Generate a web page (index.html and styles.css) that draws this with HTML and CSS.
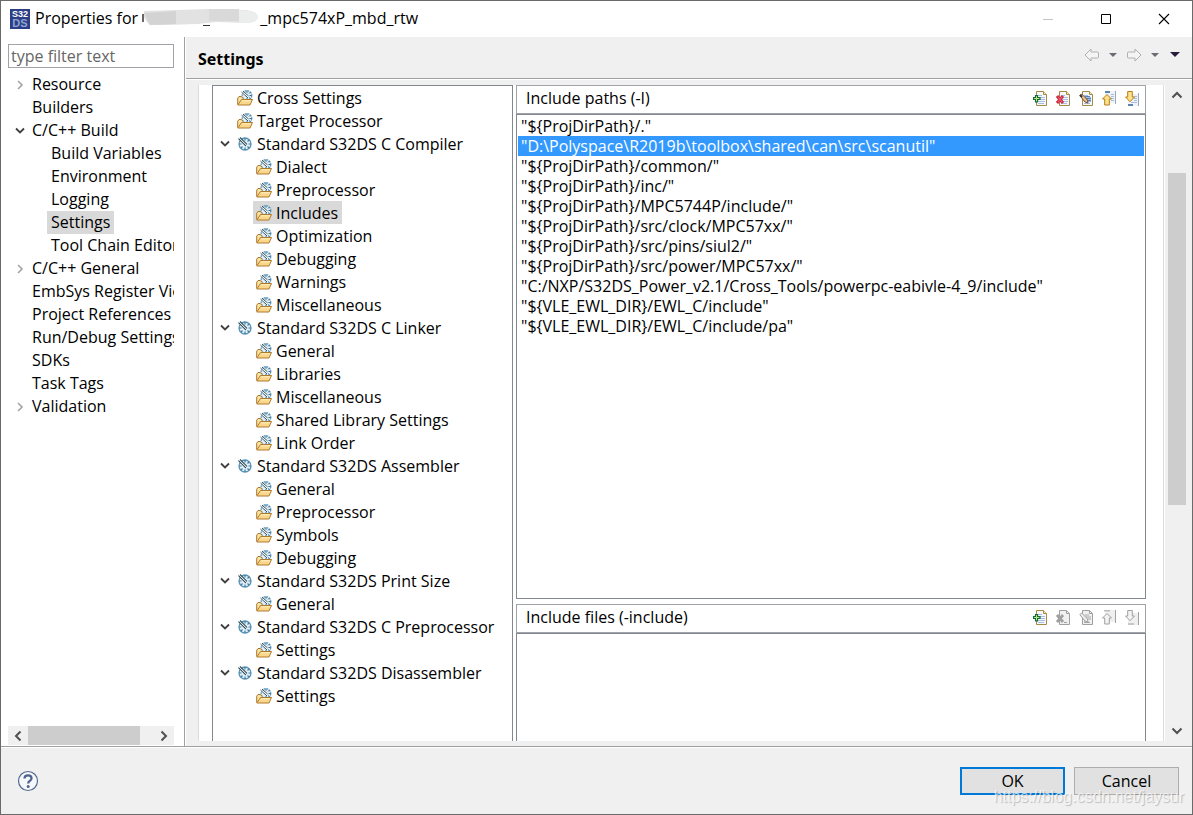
FILE: index.html
```html
<!DOCTYPE html>
<html lang="en">
<head>
<meta charset="utf-8">
<title>Properties</title>
<link rel="stylesheet" href="styles.css">
</head>
<body>
<svg class="sprite" aria-hidden="true">
  <symbol id="down" viewBox="0 0 10 8"><path d="M1 1.500l4 4 4-4" fill="none" stroke="#404040" stroke-width="1.800"/></symbol>
  <symbol id="right" viewBox="0 0 8 10"><path d="M2 1l4 4-4 4" fill="none" stroke="#a6a6a6" stroke-width="1.700"/></symbol>
  <symbol id="dial" viewBox="0 0 16 16">
    <circle cx="8" cy="8" r="6" fill="#e4f0f7" stroke="#5b93b5" stroke-width="1.300"/>
    <path d="M8 2v2.500M14 8h-2.500M8 14v-2.500M2 8h2.500M12 4l-1.500 1.500M12 12L10.500 10.500M4 12L5.500 10.500" stroke="#3a7ca5" stroke-width="1.200"/>
    <path d="M1.500 2.500L9 10M3 1.500L10 8.500" stroke="#35525f" stroke-width="1.100"/>
    <path d="M2.500 2.500L9.500 9.200" stroke="#fff" stroke-width=".8"/>
  </symbol>
  <symbol id="folder" viewBox="0 0 16 16">
    <circle cx="10" cy="5.500" r="4.800" fill="#e4f0f7" stroke="#5b93b5" stroke-width="1.200" stroke-dasharray="2 .8"/>
    <path d="M10 .8v2M14.500 5.500h-2M13.200 2.200L12 3.500M13.200 8.500L12 7.500M10 10V8" stroke="#2d6a91"/>
    <path d="M4.500 2L11 8M6 1L11.500 6" stroke="#35525f"/>
    <path d="M5 1.500L11.500 7.200" stroke="#fff" stroke-width=".8"/>
    <path d="M.7 14.500V8.200L2 6.500h2.500L6 8.500" fill="#fbe3a3" stroke="#a8742b"/>
    <path d="M.8 15L4.500 9.500h11L13 15z" fill="#f9d68a" stroke="#b07a2c"/>
    <path d="M5 10.800h9" stroke="#fff0c0"/>
  </symbol>
  <symbol id="page" viewBox="0 0 15 15">
    <path d="M3.500.5h7l3 3v11h-10z" fill="#f5f8fd" stroke="#a58a43"/>
    <path d="M10.500.5v3h3" fill="#ffe9a8" stroke="#a58a43"/>
    <path d="M5 4.500h4M5 6.500h7M5 8.500h7M5 10.500h7M5 12.500h6" stroke="#a9bce0"/>
  </symbol>
  <symbol id="page-off" viewBox="0 0 15 15">
    <path d="M3.500.5h7l3 3v11h-10z" fill="#f0f0f0" stroke="#a0a0a0"/>
    <path d="M10.500.5v3h3" fill="none" stroke="#a0a0a0"/>
  </symbol>
  <symbol id="add" viewBox="0 0 15 15"><use href="#page"/><path d="M2.500 4.500h2v2h2.500v2h-2.500v2.500h-2V8.500H.5v-2h2z" fill="#8edb5e" stroke="#176b3b" stroke-width="1.200"/><path d="M3.500 5.500v4.500M1.500 7.500h4.500" stroke="#b9ec80"/></symbol>
  <symbol id="delete" viewBox="0 0 15 15"><use href="#page"/><path d="M1 5l6 7M7 5l-6 7" stroke="#d02c43" stroke-width="3"/><path d="M2 6l4 5M6 6l-4 5" stroke="#ef6672"/></symbol>
  <symbol id="edit" viewBox="0 0 15 15"><use href="#page"/><path d="M6 5.500h5M7 7.500h5M9 9.500h3" stroke="#5f7fb5"/><path d="M.8 4.500l2-1.500 5.700 6 .5 3-3-1z" fill="#e9c384" stroke="#705039"/><path d="M1 4l2 2" stroke="#333" stroke-width="1.800"/></symbol>
  <symbol id="up" viewBox="0 0 15 15"><path d="M3 0h10v12H3z" fill="#eef2f9"/><path d="M9 3.500h3M9 5.500h3M9 7.500h3M9 9.500h3" stroke="#a9bce0"/><path d="M3 1h5" stroke="#2b5e98" stroke-width="1.500"/><path d="M13.500 0v13" stroke="#9aa6b8"/><path d="M5 3.500L9.500 8H7.300v6H2.700V8H.5z" fill="#ffe38a" stroke="#b67c16"/></symbol>
  <symbol id="move-down" viewBox="0 0 15 15"><path d="M3 3h10v12H3z" fill="#eef2f9"/><path d="M9 5.500h3M9 7.500h3M9 9.500h3M6 11.500h6" stroke="#a9bce0"/><path d="M3 14h5" stroke="#2b5e98" stroke-width="1.500"/><path d="M13.500 2v13" stroke="#9aa6b8"/><path d="M2.700.5h4.600V6h2.200L5 10.700.5 6h2.200z" fill="#ffe38a" stroke="#b67c16"/></symbol>
  <symbol id="delete-off" viewBox="0 0 15 15"><use href="#page-off"/><path d="M1 5l6 7M7 5l-6 7" stroke="#a0a0a0" stroke-width="2.800"/><path d="M8 12.500h3" stroke="#a0a0a0"/></symbol>
  <symbol id="edit-off" viewBox="0 0 15 15"><use href="#page-off"/><path d="M6 5h4M7 7h5M9 9h3M5 11h3M5 12.500h6" stroke="#a8a8a8"/><path d="M.8 4.500l2-1.500 5.700 6 .5 3-3-1z" fill="#eee" stroke="#a0a0a0"/></symbol>
  <symbol id="up-off" viewBox="0 0 15 15"><path d="M3 0h10v12H3z" fill="#efefef"/><path d="M2 .8h6M13.500 0v13" stroke="#a0a0a0"/><path d="M5 3.500L9.500 8H7.300v6H2.700V8H.5z" fill="#f3f3f3" stroke="#a0a0a0"/></symbol>
  <symbol id="down-off" viewBox="0 0 15 15"><path d="M3 3h10v12H3z" fill="#efefef"/><path d="M3 14h6M13.500 2v13" stroke="#a0a0a0"/><path d="M2.700.5h4.600V6h2.200L5 10.700.5 6h2.200z" fill="#f3f3f3" stroke="#a0a0a0"/></symbol>
</svg>

<div class="window">
  <header class="titlebar">
    <svg class="app-icon" viewBox="0 0 20 20" aria-hidden="true">
      <rect width="20" height="20" fill="#2b3f88"/>
      <text x="10" y="8" class="logo-top">S32</text>
      <text x="10" y="18" class="logo-bottom">DS</text>
    </svg>
    <h1 class="title">Properties for <span class="redacted"><svg viewBox="0 0 118 20" aria-hidden="true">
      <path d="M1 6v8" stroke="#333" stroke-width="1.500"/>
      <path d="M2 3L34 2 66 1 104 2Q116 4 116 9T104 15L74 14 56 16 22 17 8 17Q4 14 2 9z" fill="#e2e2e2"/>
      <path d="M2 5L34 3v13L8 17z" fill="#d3d3d3"/><path d="M67 1h30v12H67z" fill="#d9d9d9"/>
      <path d="M97 2l9 1q10 2 10 6t-12 6l-7-1z" fill="#eceeee"/><path d="M61 17.500h7" stroke="#333"/>
    </svg></span>_mpc574xP_mbd_rtw</h1>
    <div class="window-controls">
      <button type="button" aria-label="Minimize" disabled><svg viewBox="0 0 12 12"><path d="M1 6.500h10" stroke="#c4c4c4"/></svg></button>
      <button type="button" aria-label="Maximize"><svg viewBox="0 0 12 12"><path d="M1.500 1.500h9v9h-9z" fill="none" stroke="#000"/></svg></button>
      <button type="button" aria-label="Close"><svg viewBox="0 0 12 12"><path d="M1 1l10 10M11 1L1 11" stroke="#000" stroke-width="1.100"/></svg></button>
    </div>
  </header>

  <div class="body">
    <nav class="sidebar" aria-label="Property pages">
      <input class="filter" type="text" placeholder="type filter text" aria-label="type filter text">
      <ul class="tree nav-tree">
        <li class="row"><button class="toggle" aria-label="Expand Resource"><svg class="closed"><use href="#right"/></svg></button><span class="label">Resource</span></li>
        <li class="row"><span class="toggle"></span><span class="label">Builders</span></li>
        <li class="row"><button class="toggle" aria-label="Collapse C/C++ Build"><svg class="open"><use href="#down"/></svg></button><span class="label">C/C++ Build</span></li>
        <li class="row child"><span class="label">Build Variables</span></li>
        <li class="row child"><span class="label">Environment</span></li>
        <li class="row child"><span class="label">Logging</span></li>
        <li class="row child"><span class="label selected">Settings</span></li>
        <li class="row child"><span class="label">Tool Chain Editor</span></li>
        <li class="row"><button class="toggle" aria-label="Expand C/C++ General"><svg class="closed"><use href="#right"/></svg></button><span class="label">C/C++ General</span></li>
        <li class="row"><span class="toggle"></span><span class="label">EmbSys Register View</span></li>
        <li class="row"><span class="toggle"></span><span class="label">Project References</span></li>
        <li class="row"><span class="toggle"></span><span class="label">Run/Debug Settings</span></li>
        <li class="row"><span class="toggle"></span><span class="label">SDKs</span></li>
        <li class="row"><span class="toggle"></span><span class="label">Task Tags</span></li>
        <li class="row"><button class="toggle" aria-label="Expand Validation"><svg class="closed"><use href="#right"/></svg></button><span class="label">Validation</span></li>
      </ul>
      <div class="hscroll">
        <button type="button" aria-label="Scroll left"><svg viewBox="0 0 10 12"><path d="M7.500 1.500L3 6l4.500 4.500" fill="none" stroke="#505050" stroke-width="2"/></svg></button>
        <div class="hthumb"></div>
        <button type="button" aria-label="Scroll right"><svg viewBox="0 0 10 12"><path d="M2.500 1.500L7 6l-4.500 4.500" fill="none" stroke="#505050" stroke-width="2"/></svg></button>
      </div>
    </nav>

    <main class="main">
      <div class="page-head">
        <h2>Settings</h2>
        <div class="history">
          <button type="button" class="arrow" aria-label="Back" disabled><svg viewBox="0 0 16 14"><path d="M1 7l6-6v3h6.500q1 0 1 1v4q0 1-1 1H7v3z" fill="#f4f4f4" stroke="#b0b0b0"/></svg></button>
          <button type="button" class="caret" aria-label="Back history"><svg viewBox="0 0 8 4"><path d="M0 0h8L4 4z" fill="#6b6b72"/></svg></button>
          <button type="button" class="arrow" aria-label="Forward" disabled><svg viewBox="0 0 16 14"><path d="M15 7L9 1v3H2.500q-1 0-1 1v4q0 1 1 1H9v3z" fill="#f4f4f4" stroke="#b0b0b0"/></svg></button>
          <button type="button" class="caret" aria-label="Forward history"><svg viewBox="0 0 8 4"><path d="M0 0h8L4 4z" fill="#6b6b72"/></svg></button>
          <button type="button" class="caret menu" aria-label="View menu"><svg viewBox="0 0 10 5"><path d="M0 0h10L5 5z" fill="#281c3c"/></svg></button>
        </div>
      </div>

      <div class="content">
        <div class="panel">
          <ul class="tree tool-tree">
            <li class="row"><span class="toggle"></span><svg class="icon"><use href="#folder"/></svg><span class="label">Cross Settings</span></li>
            <li class="row"><span class="toggle"></span><svg class="icon"><use href="#folder"/></svg><span class="label">Target Processor</span></li>
            <li class="row"><button class="toggle" aria-label="Collapse"><svg class="open"><use href="#down"/></svg></button><svg class="icon"><use href="#dial"/></svg><span class="label">Standard S32DS C Compiler</span></li>
            <li class="row child"><span class="item"><svg class="icon"><use href="#folder"/></svg><span class="label">Dialect</span></span></li>
            <li class="row child"><span class="item"><svg class="icon"><use href="#folder"/></svg><span class="label">Preprocessor</span></span></li>
            <li class="row child"><span class="item selected"><svg class="icon"><use href="#folder"/></svg><span class="label">Includes</span></span></li>
            <li class="row child"><span class="item"><svg class="icon"><use href="#folder"/></svg><span class="label">Optimization</span></span></li>
            <li class="row child"><span class="item"><svg class="icon"><use href="#folder"/></svg><span class="label">Debugging</span></span></li>
            <li class="row child"><span class="item"><svg class="icon"><use href="#folder"/></svg><span class="label">Warnings</span></span></li>
            <li class="row child"><span class="item"><svg class="icon"><use href="#folder"/></svg><span class="label">Miscellaneous</span></span></li>
            <li class="row"><button class="toggle" aria-label="Collapse"><svg class="open"><use href="#down"/></svg></button><svg class="icon"><use href="#dial"/></svg><span class="label">Standard S32DS C Linker</span></li>
            <li class="row child"><span class="item"><svg class="icon"><use href="#folder"/></svg><span class="label">General</span></span></li>
            <li class="row child"><span class="item"><svg class="icon"><use href="#folder"/></svg><span class="label">Libraries</span></span></li>
            <li class="row child"><span class="item"><svg class="icon"><use href="#folder"/></svg><span class="label">Miscellaneous</span></span></li>
            <li class="row child"><span class="item"><svg class="icon"><use href="#folder"/></svg><span class="label">Shared Library Settings</span></span></li>
            <li class="row child"><span class="item"><svg class="icon"><use href="#folder"/></svg><span class="label">Link Order</span></span></li>
            <li class="row"><button class="toggle" aria-label="Collapse"><svg class="open"><use href="#down"/></svg></button><svg class="icon"><use href="#dial"/></svg><span class="label">Standard S32DS Assembler</span></li>
            <li class="row child"><span class="item"><svg class="icon"><use href="#folder"/></svg><span class="label">General</span></span></li>
            <li class="row child"><span class="item"><svg class="icon"><use href="#folder"/></svg><span class="label">Preprocessor</span></span></li>
            <li class="row child"><span class="item"><svg class="icon"><use href="#folder"/></svg><span class="label">Symbols</span></span></li>
            <li class="row child"><span class="item"><svg class="icon"><use href="#folder"/></svg><span class="label">Debugging</span></span></li>
            <li class="row"><button class="toggle" aria-label="Collapse"><svg class="open"><use href="#down"/></svg></button><svg class="icon"><use href="#dial"/></svg><span class="label">Standard S32DS Print Size</span></li>
            <li class="row child"><span class="item"><svg class="icon"><use href="#folder"/></svg><span class="label">General</span></span></li>
            <li class="row"><button class="toggle" aria-label="Collapse"><svg class="open"><use href="#down"/></svg></button><svg class="icon"><use href="#dial"/></svg><span class="label">Standard S32DS C Preprocessor</span></li>
            <li class="row child"><span class="item"><svg class="icon"><use href="#folder"/></svg><span class="label">Settings</span></span></li>
            <li class="row"><button class="toggle" aria-label="Collapse"><svg class="open"><use href="#down"/></svg></button><svg class="icon"><use href="#dial"/></svg><span class="label">Standard S32DS Disassembler</span></li>
            <li class="row child"><span class="item"><svg class="icon"><use href="#folder"/></svg><span class="label">Settings</span></span></li>
          </ul>

          <div class="options">
            <section class="group paths">
              <div class="group-head">
                <h3>Include paths (-I)</h3>
                <div class="tools">
                  <button type="button" aria-label="Add"><svg><use href="#add"/></svg></button>
                  <button type="button" aria-label="Delete"><svg><use href="#delete"/></svg></button>
                  <button type="button" aria-label="Edit"><svg><use href="#edit"/></svg></button>
                  <button type="button" aria-label="Move up"><svg><use href="#up"/></svg></button>
                  <button type="button" aria-label="Move down"><svg><use href="#move-down"/></svg></button>
                </div>
              </div>
              <ul class="list" role="listbox" aria-label="Include paths">
                <li role="option">"${ProjDirPath}/."</li>
                <li role="option" aria-selected="true" class="active">"D:\Polyspace\R2019b\toolbox\shared\can\src\scanutil"</li>
                <li role="option">"${ProjDirPath}/common/"</li>
                <li role="option">"${ProjDirPath}/inc/"</li>
                <li role="option">"${ProjDirPath}/MPC5744P/include/"</li>
                <li role="option">"${ProjDirPath}/src/clock/MPC57xx/"</li>
                <li role="option">"${ProjDirPath}/src/pins/siul2/"</li>
                <li role="option">"${ProjDirPath}/src/power/MPC57xx/"</li>
                <li role="option">"C:/NXP/S32DS_Power_v2.1/Cross_Tools/powerpc-eabivle-4_9/include"</li>
                <li role="option">"${VLE_EWL_DIR}/EWL_C/include"</li>
                <li role="option">"${VLE_EWL_DIR}/EWL_C/include/pa"</li>
              </ul>
            </section>
            <section class="group files">
              <div class="group-head">
                <h3>Include files (-include)</h3>
                <div class="tools">
                  <button type="button" aria-label="Add"><svg><use href="#add"/></svg></button>
                  <button type="button" aria-label="Delete" disabled><svg><use href="#delete-off"/></svg></button>
                  <button type="button" aria-label="Edit" disabled><svg><use href="#edit-off"/></svg></button>
                  <button type="button" aria-label="Move up" disabled><svg><use href="#up-off"/></svg></button>
                  <button type="button" aria-label="Move down" disabled><svg><use href="#down-off"/></svg></button>
                </div>
              </div>
              <ul class="list" role="listbox" aria-label="Include files"></ul>
            </section>
          </div>
        </div>
        <div class="vscroll">
          <button type="button" aria-label="Scroll up"><svg viewBox="0 0 12 10"><path d="M1.500 7.500L6 3l4.500 4.500" fill="none" stroke="#505050" stroke-width="2"/></svg></button>
          <div class="track"><div class="vthumb"></div></div>
          <button type="button" aria-label="Scroll down"><svg viewBox="0 0 12 10"><path d="M1.500 2.500L6 7l4.500-4.500" fill="none" stroke="#505050" stroke-width="2"/></svg></button>
        </div>
      </div>
    </main>
  </div>

  <footer class="footer">
    <button type="button" class="help" aria-label="Help"><svg viewBox="0 0 22 22"><circle cx="11" cy="11" r="9.500" fill="#f6f8fb" stroke="#536a91" stroke-width="1.200"/><path d="M7.500 8.500Q7.500 5.300 11 5.300T14.500 8.300Q14.500 10 12.700 11 11.200 11.800 11.200 13.500" fill="none" stroke="#4d648c" stroke-width="2.300"/><circle cx="11.200" cy="16.500" r="1.500" fill="#4d648c"/></svg></button>
    <div class="actions">
      <button type="button" class="push primary">OK</button>
      <button type="button" class="push">Cancel</button>
    </div>
    <span class="watermark">https://blog.csdn.net/jaysur</span>
  </footer>
</div>
</body>
</html>
```

FILE: styles.css
```css
* { box-sizing: border-box; }
body {
  margin: 0;
  color: #000;
  font: 16px/20px "Open Sans", "Noto Sans", sans-serif;
}
ul { margin: 0; padding: 0; list-style: none; }
h1, h2, h3 { margin: 0; font-size: 16px; font-weight: 400; }
button { margin: 0; padding: 0; border: 0; background: none; color: inherit; font: inherit; }
svg { display: block; }
.sprite { position: absolute; width: 0; height: 0; }

.window {
  display: flex;
  flex-direction: column;
  height: 100vh;
  min-height: 600px;
  border: 1px solid #6a6a6a;
  background: #fff;
}

.titlebar { display: flex; align-items: center; flex: none; height: 36px; padding-left: 9px; }
.app-icon { width: 20px; height: 20px; margin-right: 5px; }
.logo-top, .logo-bottom { font-family: "Liberation Sans", sans-serif; font-weight: 700; text-anchor: middle; }
.logo-top { font-size: 9px; fill: #fff; }
.logo-bottom { font-size: 11px; fill: #93a3d2; }
.title { display: flex; flex: 1; padding-bottom: 2px; white-space: pre; }
.redacted svg { width: 118px; height: 20px; }
.window-controls { display: flex; gap: 46px; padding-right: 22px; }
.window-controls svg { width: 12px; height: 12px; }

.body { display: flex; flex: 1; min-height: 0; }

.sidebar {
  display: flex;
  flex-direction: column;
  flex: none;
  width: 184px;
  padding: 7px 10px 1px 7px;
  border-right: 1px solid #a0a0a0;
}
.filter {
  flex: none;
  width: 100%;
  height: 24px;
  padding: 0 2px;
  border: 1px solid #a0a3a8;
  font: inherit;
}
.filter::placeholder { color: #666; opacity: 1; }
.tree { overflow: hidden; white-space: nowrap; }
.row { display: flex; align-items: center; height: 23px; }
.toggle { display: flex; align-items: center; justify-content: center; flex: none; }
.open { width: 10px; height: 8px; }
.closed { width: 8px; height: 10px; }
.selected { background: #d9d9d9; }

.nav-tree { flex: 1; padding-top: 5px; }
.nav-tree .toggle { width: 20px; padding-left: 3px; }
.nav-tree .label { padding: 0 4px; line-height: 23px; }
.nav-tree .child { padding-left: 39px; }

.hscroll { display: flex; align-items: center; flex: none; height: 19px; background: #f0f0f0; }
.hscroll button { padding: 0 5px; }
.hscroll svg { width: 10px; height: 12px; }
.hthumb { width: 112px; height: 19px; margin-right: auto; background: #cdcdcd; }

.main { display: flex; flex-direction: column; flex: 1; min-width: 0; margin-left: 1px; background: #f0f0f0; }
.page-head {
  display: flex;
  align-items: center;
  justify-content: space-between;
  flex: none;
  height: 42px;
  padding: 2px 12px 0;
  border-bottom: 1px solid #a0a0a0;
}
.page-head h2 { font-family: "Noto Sans", sans-serif; font-weight: 700; }
.history { display: flex; align-items: center; gap: 9px; padding-bottom: 8px; }
.arrow svg { width: 16px; height: 14px; }
.caret svg { width: 8px; height: 4px; }
.menu { margin-left: 2px; }
.menu svg { width: 10px; height: 5px; }

.content { display: flex; flex: 1; min-height: 0; padding: 5px 5px 5px 12px; border-top: 1px solid #fff; }
.panel {
  display: flex;
  flex: 1;
  min-width: 0;
  gap: 3px;
  padding: 0 17px 0 13px;
  border: solid #dcdcdc;
  border-width: 0 1px;
  background: #fff;
}
.tool-tree { flex: none; width: 301px; border: 1px solid #828790; border-bottom: 0; }
.tool-tree .toggle { width: 24px; }
.tool-tree .icon { flex: none; width: 16px; height: 16px; }
.tool-tree .label { padding-left: 4px; }
.tool-tree .child { padding-left: 40px; }
.item { display: flex; align-items: center; height: 23px; padding: 0 4px 0 3px; }

.options { display: flex; flex-direction: column; flex: 1; min-width: 0; gap: 5px; }
.group { display: flex; flex-direction: column; }
.paths { flex: 1; min-height: 0; }
.files { flex: none; height: 137px; }
.group-head {
  display: flex;
  align-items: center;
  justify-content: space-between;
  flex: none;
  height: 29px;
  padding: 0 5px 3px 9px;
  border: 1px solid #a0a3a8;
}
.tools { display: flex; gap: 8px; }
.tools svg { width: 15px; height: 15px; }
.list { flex: 1; overflow: hidden; padding: 1px; border: 1px solid #828790; white-space: nowrap; }
.files .list { border-bottom: 0; }
.list li { padding: 0 3px; line-height: 20px; }
.list .active { background: #3399ff; color: #fff; }

.vscroll { display: flex; flex-direction: column; align-items: center; flex: none; width: 23px; padding: 5px 1px 5px 3px; border-left: 1px solid #fff; }
.vscroll svg { width: 12px; height: 10px; }
.track { display: flex; flex-direction: column; flex: 1; align-self: stretch; padding-top: 73px; }
.vthumb { flex: 0 1 332px; background: #cdcdcd; }

.footer {
  display: flex;
  position: relative;
  align-items: center;
  justify-content: space-between;
  flex: none;
  height: 68px;
  padding: 0 13px 0 16px;
  border-top: 1px solid #a0a0a0;
  background: #f0f0f0;
  box-shadow: inset 0 1px #fff;
}
.help svg { width: 22px; height: 22px; }
.actions { display: flex; gap: 9px; }
.push { width: 105px; height: 28px; border: 1px solid #adadad; background: #e1e1e1; }
.primary { border: 2px solid #0078d7; }
.watermark {
  position: absolute;
  right: 8px;
  bottom: 8px;
  color: rgba(255, 255, 255, .7);
  font: 16px/18px "Liberation Sans", sans-serif;
  text-shadow: 1px 1px 1px rgba(0, 0, 0, .22);
  pointer-events: none;
}
```
